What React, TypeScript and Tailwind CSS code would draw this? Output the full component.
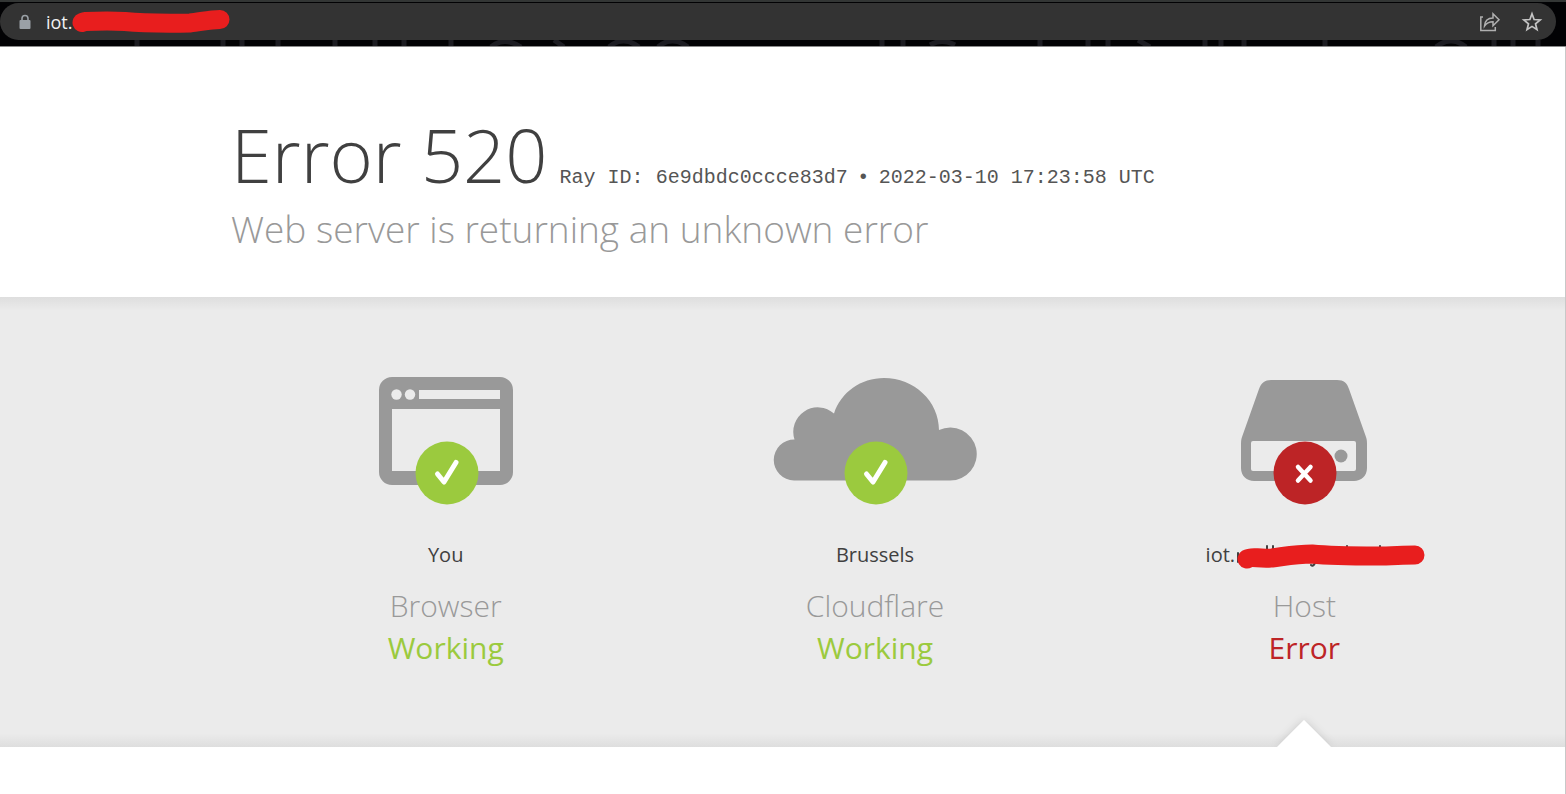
import React from 'react';

interface StatusColumnProps {
  icon: React.ReactNode;
  ok: boolean;
  location: React.ReactNode;
  name: string;
}

const strokes = [137, 223, 242, 278, 335, 375, 404, 451, 882, 903, 1040, 1088, 1108, 1205, 1221, 1244, 1325, 1494, 1513, 1538];

function Scribble({ d, className, children }: { d: string; className: string; children?: React.ReactNode }) {
  return (
    <svg className={className} fill="none" strokeLinecap="round" strokeLinejoin="round" aria-hidden="true">
      {children}
      <path d={d} stroke="#e81e1e" strokeWidth="19" />
    </svg>
  );
}

function AddressBar() {
  return (
    <header className="relative h-[47px] border-t-2 border-[#333635] border-b border-b-[#8a8a8a] bg-[#020204] pt-px pr-[10px]">
      {/* faint theme artwork behind the address bar */}
      <svg className="absolute inset-x-0 bottom-0 h-[6px] w-full" fill="none" stroke="#1c1c22" strokeWidth="5" aria-hidden="true">
        {strokes.map((x) => (
          <path key={x} d={`M${x} 0v6`} />
        ))}
        <path d="M491 7q13 -11 30 0M554 0l10 7M609 7q14 -12 30 0M658 7q14 -12 30 0M1436 7q15 -12 30 0M930 5q12 -7 25 0M1138 0l12 7" />
      </svg>
      <div className="relative flex h-[37px] items-center rounded-full bg-[#333333] pl-[19px] pr-3">
        <svg className="h-4 w-3" viewBox="0 0 12 16" aria-hidden="true">
          <path d="M3 7V4.500a3 3 0 0 1 6 0V7" fill="none" stroke="#9aa0a6" strokeWidth="1.600" />
          <rect x="0.500" y="6" width="11" height="9" rx="1" fill="#9aa0a6" />
        </svg>
        <div className="relative ml-[15px] flex flex-1 items-center">
          <input
            aria-label="Address"
            defaultValue="iot."
            className="w-full bg-transparent font-['Open_Sans','Segoe_UI',sans-serif] text-lg leading-6 text-[#f1f1f1] outline-none"
          />
          <Scribble
            className="absolute left-6 top-0 h-6 w-40"
            d="M12 12.500L15 11.500C30 11 45 11 55 11.500C70 13 90 13.500 120 13C130 12 140 9.500 150 9.500"
          />
        </div>
        <button aria-label="Share" className="flex size-6 items-center justify-center">
          <svg className="size-6" fill="none" stroke="#b0b0b0" strokeWidth="1.500" viewBox="0 0 24 24">
            <path d="M5 7H2.800v13.500h14.500V17" />
            <path d="M6.500 16c.4-5.500 3.500-8 8.500-8V3.800L21 9.800l-6 6v-4c-3.800 0-6.500 1.200-8.500 4.200z" />
          </svg>
        </button>
        <button aria-label="Bookmark this page" className="ml-[18px] flex size-6 items-center justify-center">
          <svg className="size-6" fill="none" stroke="#c4c4c4" strokeWidth="1.700" viewBox="0 0 24 24">
            <path d="M12 3.800l2.100 5.700 6.100.4-4.700 3.900 1.500 5.900L12 16.400l-5 3.300 1.500-5.900-4.700-3.900 6.100-.4z" />
          </svg>
        </button>
      </div>
    </header>
  );
}

function BrowserIcon() {
  return (
    <svg className="h-[108px] w-[136px]" viewBox="0 0 136 108" aria-hidden="true">
      <path
        fillRule="evenodd"
        fill="#999"
        d="M14 0h108a13 13 0 0 1 13 13v82a13 13 0 0 1-13 13H14A13 13 0 0 1 1 95V13A13 13 0 0 1 14 0zM14 32v62h108V32zM41 13v9h81v-9z"
      />
      <circle cx="18.500" cy="17.500" r="5.200" fill="#ebebeb" />
      <circle cx="32" cy="17.500" r="5.200" fill="#ebebeb" />
    </svg>
  );
}

function CloudIcon() {
  return (
    <svg className="h-[104px] w-[204px]" viewBox="0 0 204 104" fill="#999" aria-hidden="true">
      <path d="M21 103.500A20.500 20.500 0 0 1 21.500 62.500A24.500 24.500 0 0 1 61 36.500C68 15 88 1 111 1C141 1 166 24 166 53A26.500 26.500 0 1 1 177 103.500z" />
    </svg>
  );
}

function ServerIcon() {
  return (
    <svg className="h-[105px] w-32" viewBox="0 -3 128 105" aria-hidden="true">
      <path
        fillRule="evenodd"
        fill="#999"
        d="M31 0h66c7 0 10 3 12 9l17 48c1 3 1 5 1 8v23c0 8-6 13-13 13H14C7 101 1 96 1 88V65c0-3 0-5 1-8L19 9C21 3 25 0 31 0zM13 61a2 2 0 0 0-2 2v26a2 2 0 0 0 2 2h101a2 2 0 0 0 2-2V63a2 2 0 0 0-2-2z"
      />
      <circle cx="101" cy="76" r="6.500" fill="#999" />
    </svg>
  );
}

function StatusBadge({ ok }: { ok: boolean }) {
  return (
    <svg className="absolute bottom-0 left-1/2 ml-[-31px] size-16" viewBox="0 0 64 64" fill="none" stroke="#fff" strokeLinecap="round" aria-hidden="true">
      <circle cx="32" cy="32" r="31.500" fill={ok ? '#9bca3e' : '#bd2426'} stroke="none" />
      {ok ? (
        <path d="M22.500 33l6.500 8L41 21.500" strokeWidth="5" strokeLinejoin="round" />
      ) : (
        <path d="M25 26L37.500 39.500M37.500 26L25 39.500" strokeWidth="4.500" />
      )}
    </svg>
  );
}

function StatusColumn({ icon, ok, location, name }: StatusColumnProps) {
  return (
    <div className="flex flex-col items-center pt-20 text-center">
      <div className="relative flex h-32 justify-center">
        {icon}
        <StatusBadge ok={ok} />
      </div>
      <span className="mt-8 flex h-9 items-center text-xl text-[#404040]">{location}</span>
      <h3 className="mt-3 text-3xl leading-[42px] font-light text-[#999999]">{name}</h3>
      <span className={`text-3xl leading-[42px] ${ok ? 'text-[#9bca3e]' : 'text-[#bd2426]'}`}>
        {ok ? 'Working' : 'Error'}
      </span>
    </div>
  );
}

function HostName() {
  return (
    <span className="-mr-6 flex items-center">
      iot.
      <Scribble
        className="h-8 w-[192px]"
        d="M12 20C17 17 22 20 37 19C52 17 62 15 77 15C97 17 122 17 142 17C157 17 167 16 180 16"
      >
        <path d="M3 23v-9M32 7v3M38 7v3M76 26q2 2 4-2M112 7v1M145 7v1" stroke="#404040" strokeWidth="2" />
      </Scribble>
    </span>
  );
}

export default function App() {
  return (
    <div className="flex min-h-screen flex-col bg-white font-['Open_Sans','Segoe_UI',sans-serif]">
      <AddressBar />
      <main className="flex-1 border-r border-[#c8c8c8]">
        <div className="h-[250px] pl-[231px] pt-[60px]">
          <h1 className="flex items-baseline gap-3 whitespace-nowrap text-[74px] leading-[96px] font-light text-[#404040]">
            <span>Error 520</span>
            <span className="font-['Liberation_Mono',monospace] text-xl font-normal text-[#555555]">
              Ray ID: 6e9dbdc0ccce83d7 <span className="font-['Liberation_Sans',sans-serif]">•</span> 2022-03-10 17:23:58 UTC
            </span>
          </h1>
          <h2 className="text-[37px] leading-[52px] font-light text-[#999999]">
            Web server is returning an unknown error
          </h2>
        </div>
        <section className="grid h-[450px] grid-cols-3 bg-[linear-gradient(to_bottom,#dedede,#ebebeb_3%,#ebebeb_97%,#dedede)] pl-[231px] pr-[46px]">
          <StatusColumn icon={<BrowserIcon />} ok location="You" name="Browser" />
          <StatusColumn icon={<CloudIcon />} ok location="Brussels" name="Cloudflare" />
          <div className="relative">
            <StatusColumn icon={<ServerIcon />} ok={false} location={<HostName />} name="Host" />
            <svg className="absolute bottom-0 left-1/2 -ml-10 h-10 w-20" viewBox="0 0 80 40" aria-hidden="true">
              <defs>
                <filter id="notch-shadow" x="-20%" y="-40%" width="140%" height="180%">
                  <feDropShadow dx="0" dy="0" stdDeviation="4" floodColor="#000" floodOpacity="0.15" />
                </filter>
              </defs>
              <path d="M13 40L40 13L67 40z" fill="#fff" filter="url(#notch-shadow)" />
            </svg>
          </div>
        </section>
      </main>
    </div>
  );
}
